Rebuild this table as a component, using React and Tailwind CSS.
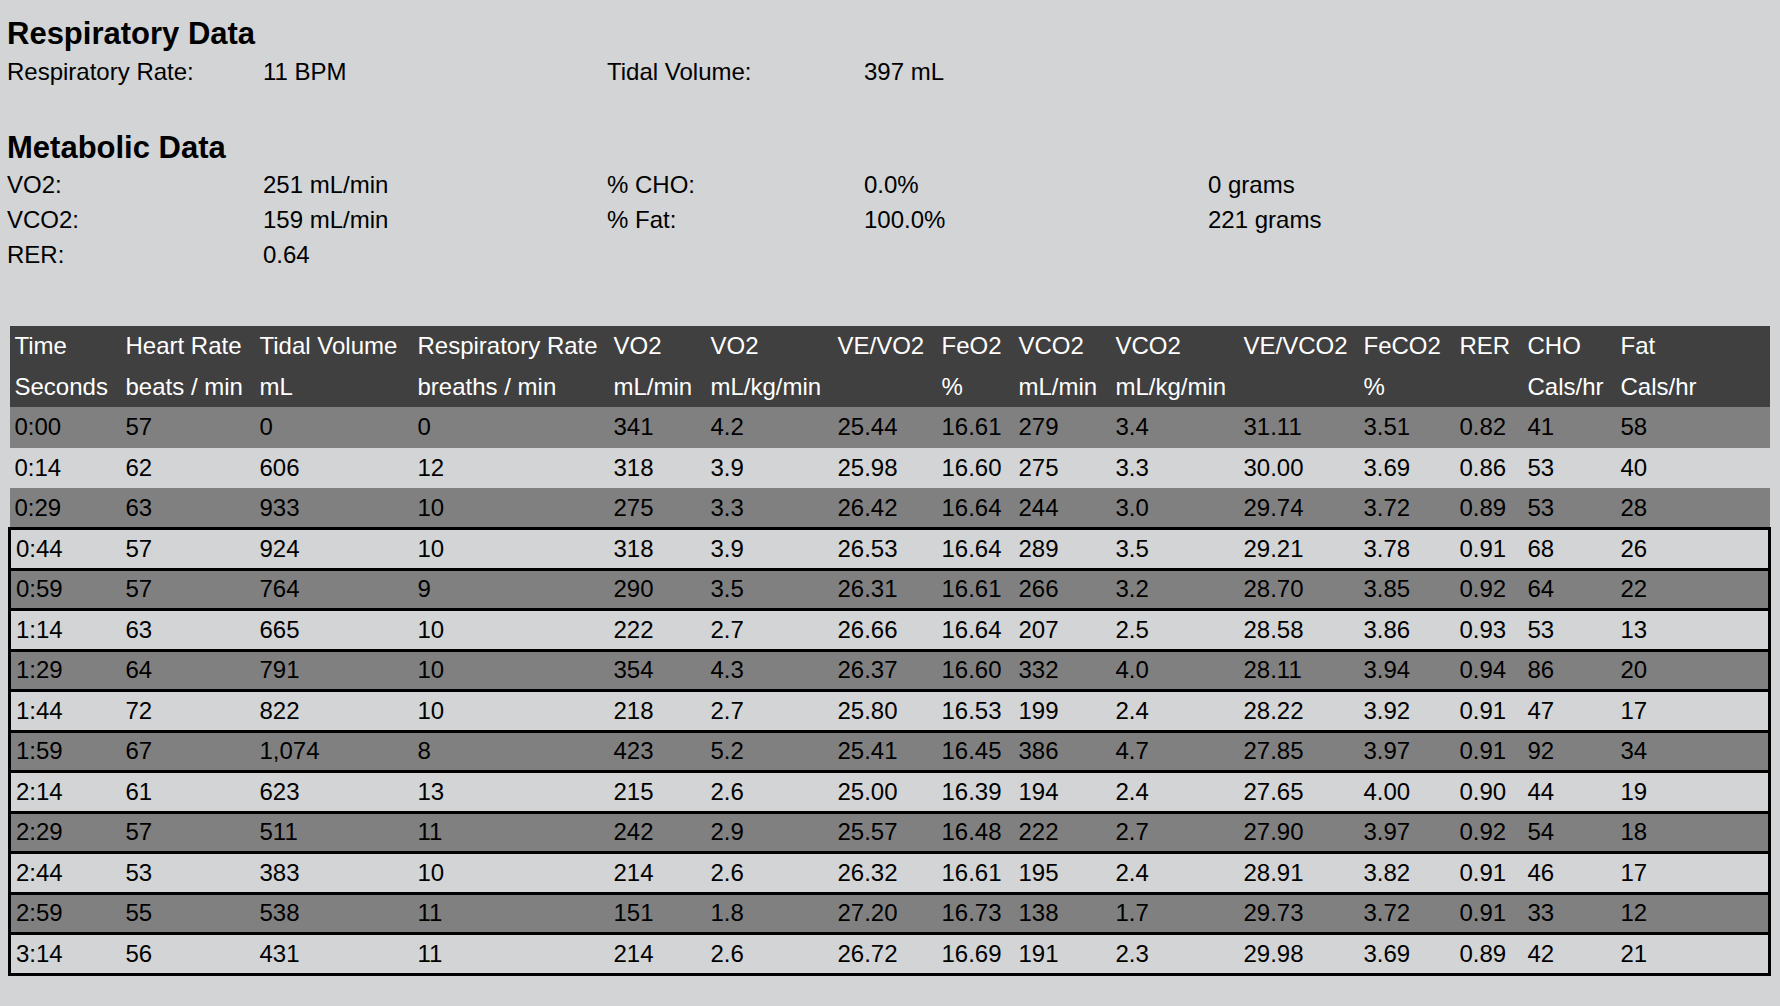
import React from "react";

const cols = [
  "w-[111px]", "w-[134px]", "w-[158px]", "w-[196px]", "w-[97px]",
  "w-[127px]", "w-[104px]", "w-[77px]", "w-[97px]", "w-[128px]",
  "w-[120px]", "w-[96px]", "w-[68px]", "w-[93px]", "w-[154px]",
];

const head1 = ["Time", "Heart Rate", "Tidal Volume", "Respiratory Rate", "VO2", "VO2", "VE/VO2", "FeO2", "VCO2", "VCO2", "VE/VCO2", "FeCO2", "RER", "CHO", "Fat"];
const head2 = ["Seconds", "beats / min", "mL", "breaths / min", "mL/min", "mL/kg/min", "", "%", "mL/min", "mL/kg/min", "", "%", "", "Cals/hr", "Cals/hr"];

const rows = [
  ["0:00", "57", "0", "0", "341", "4.2", "25.44", "16.61", "279", "3.4", "31.11", "3.51", "0.82", "41", "58"],
  ["0:14", "62", "606", "12", "318", "3.9", "25.98", "16.60", "275", "3.3", "30.00", "3.69", "0.86", "53", "40"],
  ["0:29", "63", "933", "10", "275", "3.3", "26.42", "16.64", "244", "3.0", "29.74", "3.72", "0.89", "53", "28"],
  ["0:44", "57", "924", "10", "318", "3.9", "26.53", "16.64", "289", "3.5", "29.21", "3.78", "0.91", "68", "26"],
  ["0:59", "57", "764", "9", "290", "3.5", "26.31", "16.61", "266", "3.2", "28.70", "3.85", "0.92", "64", "22"],
  ["1:14", "63", "665", "10", "222", "2.7", "26.66", "16.64", "207", "2.5", "28.58", "3.86", "0.93", "53", "13"],
  ["1:29", "64", "791", "10", "354", "4.3", "26.37", "16.60", "332", "4.0", "28.11", "3.94", "0.94", "86", "20"],
  ["1:44", "72", "822", "10", "218", "2.7", "25.80", "16.53", "199", "2.4", "28.22", "3.92", "0.91", "47", "17"],
  ["1:59", "67", "1,074", "8", "423", "5.2", "25.41", "16.45", "386", "4.7", "27.85", "3.97", "0.91", "92", "34"],
  ["2:14", "61", "623", "13", "215", "2.6", "25.00", "16.39", "194", "2.4", "27.65", "4.00", "0.90", "44", "19"],
  ["2:29", "57", "511", "11", "242", "2.9", "25.57", "16.48", "222", "2.7", "27.90", "3.97", "0.92", "54", "18"],
  ["2:44", "53", "383", "10", "214", "2.6", "26.32", "16.61", "195", "2.4", "28.91", "3.82", "0.91", "46", "17"],
  ["2:59", "55", "538", "11", "151", "1.8", "27.20", "16.73", "138", "1.7", "29.73", "3.72", "0.91", "33", "12"],
  ["3:14", "56", "431", "11", "214", "2.6", "26.72", "16.69", "191", "2.3", "29.98", "3.69", "0.89", "42", "21"],
];

function Info({ items }) {
  return (
    <div className="grid grid-cols-[256px_344px_257px_344px_1fr] leading-[35px]">
      {items.map((t, i) => (
        <div key={i}>{t}</div>
      ))}
    </div>
  );
}

export default function App() {
  return (
    <div className="w-[1780px] h-[1006px] bg-[#d2d4d5] text-black text-[24px] font-['Liberation_Sans',Arial,sans-serif] pt-[14px] overflow-hidden">
      <div className="pl-[7px]">
        <h1 className="text-[31px] font-bold leading-[40px]">Respiratory Data</h1>
        <Info items={["Respiratory Rate:", "11 BPM", "Tidal Volume:", "397 mL", ""]} />

        <h1 className="text-[31px] font-bold leading-[40px] mt-[39px]">Metabolic Data</h1>
        <div className="-mt-[1px]">
          <Info items={["VO2:", "251 mL/min", "% CHO:", "0.0%", "0 grams"]} />
          <Info items={["VCO2:", "159 mL/min", "% Fat:", "100.0%", "221 grams"]} />
          <Info items={["RER:", "0.64", "", "", ""]} />
        </div>
      </div>

      <table className="ml-[8px] mt-[54px] w-[1760px] table-fixed border-collapse">
        <colgroup>
          {cols.map((c, i) => (
            <col key={i} className={c} />
          ))}
        </colgroup>
        <thead className="bg-[#404040] text-white">
          <tr className="h-[40px]">
            {head1.map((h, i) => (
              <th key={i} className="text-left font-normal pl-[5px] whitespace-nowrap">{h}</th>
            ))}
          </tr>
          <tr className="h-[41px]">
            {head2.map((h, i) => (
              <th key={i} className="text-left font-normal pl-[5px] whitespace-nowrap">{h}</th>
            ))}
          </tr>
        </thead>
        <tbody>
          {rows.map((r, i) => (
            <tr
              key={i}
              className={
                (i % 2 === 0 ? "bg-[#808080] " : "bg-[#d2d4d5] ") +
                (i >= 3 ? "border-[3px] border-black h-[40.5px]" : "h-[40.5px]")
              }
            >
              {r.map((v, j) => (
                <td key={j} className="pl-[5px] whitespace-nowrap">{v}</td>
              ))}
            </tr>
          ))}
        </tbody>
      </table>
    </div>
  );
}
